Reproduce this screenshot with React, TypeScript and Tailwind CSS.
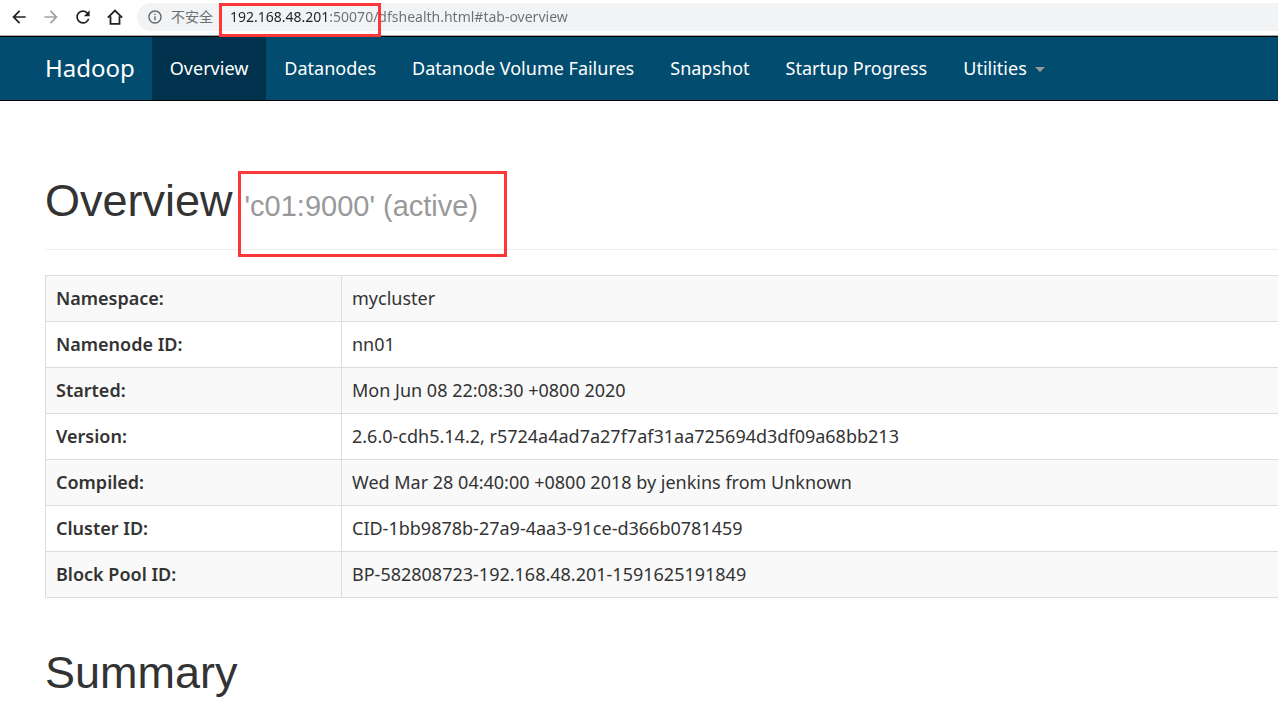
import { MdArrowBack, MdArrowForward, MdInfoOutline, MdRefresh } from 'react-icons/md';

const navItems = ['Overview', 'Datanodes', 'Datanode Volume Failures', 'Snapshot', 'Startup Progress'];

const rows = [
  ['Namespace:', 'mycluster'],
  ['Namenode ID:', 'nn01'],
  ['Started:', 'Mon Jun 08 22:08:30 +0800 2020'],
  ['Version:', '2.6.0-cdh5.14.2, r5724a4ad7a27f7af31aa725694d3df09a68bb213'],
  ['Compiled:', 'Wed Mar 28 04:40:00 +0800 2018 by jenkins from Unknown'],
  ['Cluster ID:', 'CID-1bb9878b-27a9-4aa3-91ce-d366b0781459'],
  ['Block Pool ID:', 'BP-582808723-192.168.48.201-1591625191849'],
];

const HomeIcon = () => (
  <svg viewBox="0 0 20 20" className="h-5 w-5" fill="none" stroke="currentColor" strokeWidth="1.8">
    <path d="M2.8 10.6 10 3.6l7.2 7M5.5 9.2v7.6h9V9.2" />
  </svg>
);

const BrowserBar = () => (
  <div className="flex h-9 items-center border-b border-[#a6a6a6] bg-white pb-px pl-[9px] text-[#202124]">
    <div className="flex gap-3">
      <button aria-label="Back">
        <MdArrowBack className="h-5 w-5" />
      </button>
      <button aria-label="Forward" className="text-[#a0a1a3]">
        <MdArrowForward className="h-5 w-5" />
      </button>
      <button aria-label="Reload">
        <MdRefresh className="h-5 w-5" />
      </button>
      <button aria-label="Home">
        <HomeIcon />
      </button>
    </div>
    <div className="ml-3 flex h-7 flex-1 items-center rounded-l-full bg-[#f1f3f4] pl-[10px]">
      <MdInfoOutline className="h-4 w-4 text-[#5f6368]" />
      <label htmlFor="url" className="ml-2 text-sm text-[#6b6f73]">
        不安全
      </label>
      <div className="relative ml-[17px] flex-1">
        {/* host part is dark, the rest of the address is grey */}
        <input
          id="url"
          defaultValue="192.168.48.201:50070/dfshealth.html#tab-overview"
          className="block w-full bg-linear-to-r from-[#202124] from-[100px] to-[#6b6f73] to-[100px] bg-clip-text text-sm text-transparent outline-none"
        />
        <div className="pointer-events-none absolute -top-1 -left-[11px] h-[34px] w-[162px] border-3 border-[#fb3737]" />
      </div>
    </div>
  </div>
);

const NavBar = () => (
  <nav className="flex h-[65px] border-y border-black bg-[#014c6f] pl-[45px] text-lg text-white">
    <a href="#" className="flex items-center pr-[17px] pb-[2px] text-2xl">
      Hadoop
    </a>
    {navItems.map((item, i) => (
      <a key={item} href="#" className={`flex items-center px-[18px] pb-[2px] ${i === 0 ? 'bg-[#00324e]' : ''}`}>
        {item}
      </a>
    ))}
    <button className="flex items-center gap-2 px-[18px] pb-[2px]">
      Utilities
      <span className="mt-1 border-x-5 border-t-5 border-x-transparent border-t-[#999999]" />
    </button>
  </nav>
);

const App = () => {
  return (
    <div className="min-h-screen overflow-hidden bg-white font-['Noto_Sans','Noto_Sans_CJK_SC',sans-serif] text-[#333333]">
      <BrowserBar />
      <NavBar />
      <main className="pt-[75px] pl-[45px]">
        <h1 className="flex items-baseline gap-3 border-b border-[#eeeeee] pb-[18px] font-['Liberation_Sans',sans-serif] text-[45px] leading-[50px]">
          Overview
          <small className="relative text-[29px] text-[#999999]">
            'c01:9000' (active)
            <span className="pointer-events-none absolute -top-[10px] -left-[7px] h-[86px] w-[269px] border-3 border-[#fb3737]" />
          </small>
        </h1>
        <table className="mt-[25px] w-full border-collapse border-y border-l border-[#dddddd] text-lg">
          <tbody>
            {rows.map(([name, value]) => (
              <tr key={name} className="h-[46px] border-t border-[#dddddd] odd:bg-[#f9f9f9]">
                <th scope="row" className="w-[296px] border-r border-[#dddddd] px-[10px] pb-[2px] text-left font-semibold">
                  {name}
                </th>
                <td className="px-[10px] pb-[2px]">{value}</td>
              </tr>
            ))}
          </tbody>
        </table>
        <h1 className="mt-[50px] font-['Liberation_Sans',sans-serif] text-[45px] leading-[50px]">Summary</h1>
      </main>
    </div>
  );
};

export default App;
